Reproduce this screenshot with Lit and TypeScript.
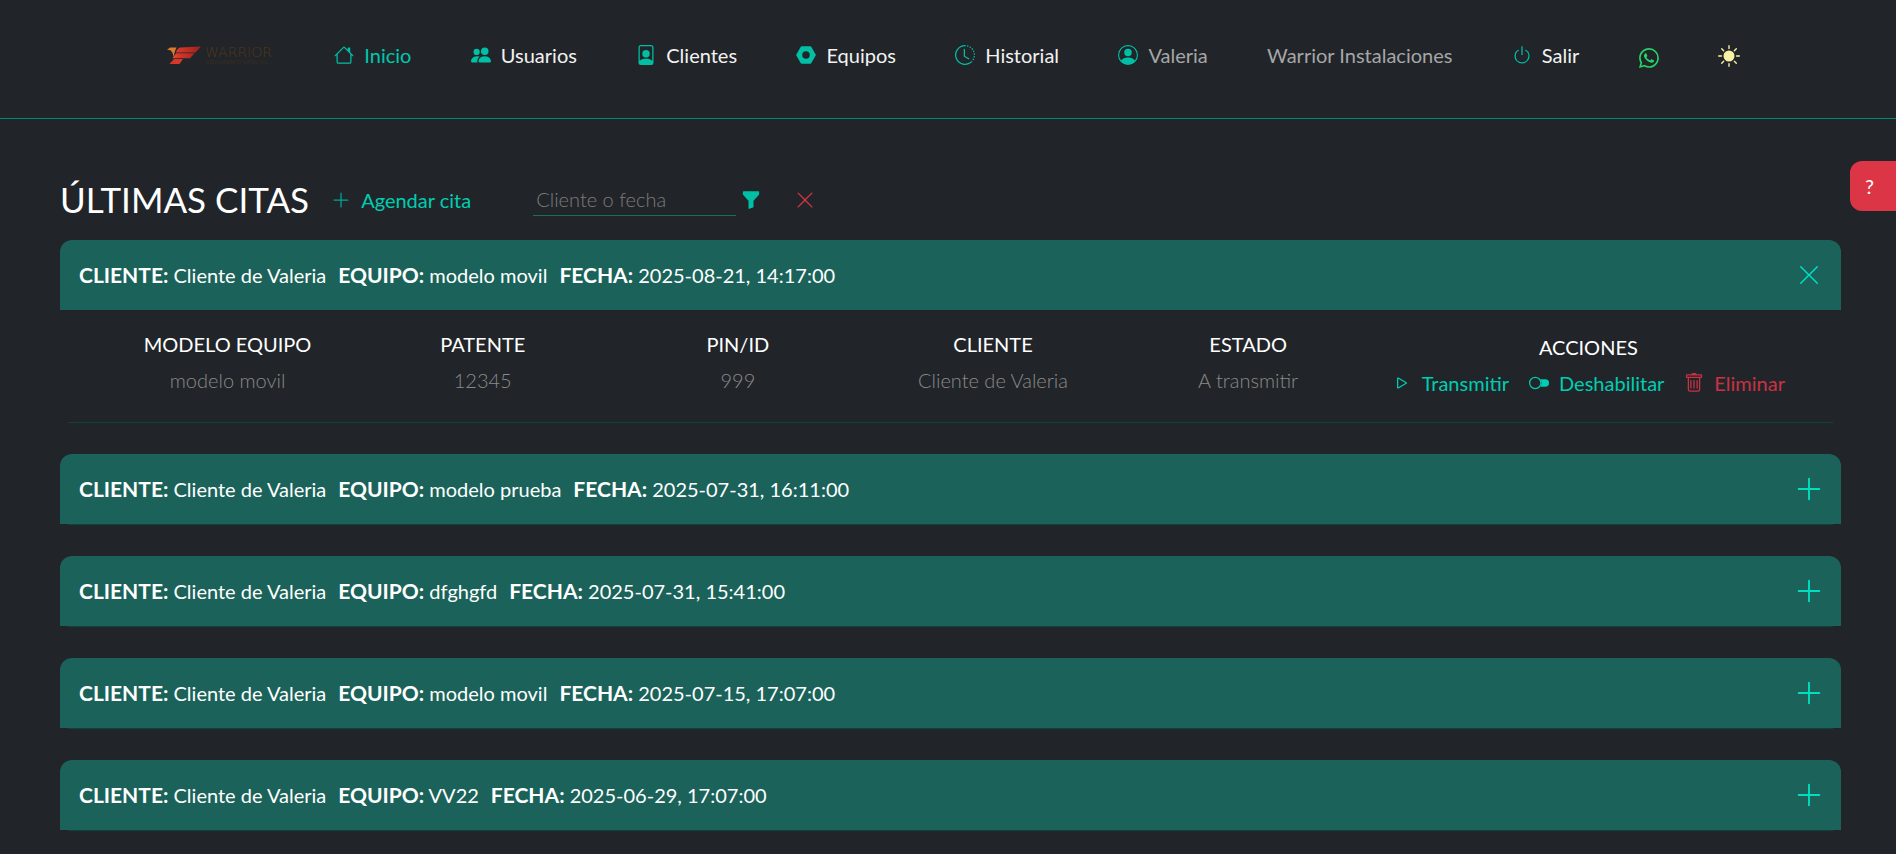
import { LitElement, html, css, svg } from "lit";
import { customElement, property, state } from "lit/decorators.js";

const ICONS: Record<string, string[]> = {
  house: ["M8.707 1.5a1 1 0 0 0-1.414 0L.646 8.146a.5.5 0 0 0 .708.708L2 8.207V13.5A1.5 1.5 0 0 0 3.5 15h9a1.5 1.5 0 0 0 1.5-1.5V8.207l.646.647a.5.5 0 0 0 .708-.708L13 5.793V2.5a.5.5 0 0 0-.5-.5h-1a.5.5 0 0 0-.5.5v1.293zM13 7.207V13.5a.5.5 0 0 1-.5.5h-9a.5.5 0 0 1-.5-.5V7.207l5-5z"],
  people: ["M7 14s-1 0-1-1 1-4 5-4 5 3 5 4-1 1-1 1zm4-6a3 3 0 1 0 0-6 3 3 0 0 0 0 6m-5.784 6A2.24 2.24 0 0 1 5 13c0-1.355.68-2.75 1.936-3.72A6.3 6.3 0 0 0 5 9c-4 0-5 3-5 4s1 1 1 1zM4.5 8a2.5 2.5 0 1 0 0-5 2.5 2.5 0 0 0 0 5"],
  person: ["M12 1a1 1 0 0 1 1 1v10.755S12 11 8 11s-5 1.755-5 1.755V2a1 1 0 0 1 1-1zM4 0a2 2 0 0 0-2 2v12a2 2 0 0 0 2 2h8a2 2 0 0 0 2-2V2a2 2 0 0 0-2-2z", "M8 10a3 3 0 1 0 0-6 3 3 0 0 0 0 6"],
  nut: ["M4.58 1a1 1 0 0 0-.868.504l-3.428 6a1 1 0 0 0 0 .992l3.428 6A1 1 0 0 0 4.58 15h6.84a1 1 0 0 0 .868-.504l3.429-6a1 1 0 0 0 0-.992l-3.429-6A1 1 0 0 0 11.42 1zM8 5a3 3 0 1 1 0 6 3 3 0 0 1 0-6"],
  history: ["M8.515 1.019A7 7 0 0 0 8 1V0a8 8 0 0 1 .589.022zm2.004.45a7 7 0 0 0-.985-.299l.219-.976q.576.129 1.126.342zm1.37.71a7 7 0 0 0-.439-.27l.493-.87a8 8 0 0 1 .979.654l-.615.789a7 7 0 0 0-.418-.302zm1.834 1.79a7 7 0 0 0-.653-.796l.724-.69q.406.429.747.91zm.744 1.352a7 7 0 0 0-.214-.468l.893-.45a8 8 0 0 1 .45 1.088l-.95.313a7 7 0 0 0-.179-.483m.53 2.507a7 7 0 0 0-.1-1.025l.985-.17q.1.58.116 1.17zm-.131 1.538q.05-.254.081-.51l.993.123a8 8 0 0 1-.23 1.155l-.964-.267q.069-.247.12-.501m-.952 2.379q.276-.436.486-.908l.914.405q-.24.54-.555 1.038zm-.964 1.205q.183-.183.35-.378l.758.653a8 8 0 0 1-.401.432z", "M8 1a7 7 0 1 0 4.95 11.95l.707.707A8.001 8.001 0 1 1 8 0z", "M7.5 3a.5.5 0 0 1 .5.5v5.21l3.248 1.856a.5.5 0 0 1-.496.868l-3.5-2A.5.5 0 0 1 7 9V3.5a.5.5 0 0 1 .5-.5"],
  account: ["M11 6a3 3 0 1 1-6 0 3 3 0 0 1 6 0", "M0 8a8 8 0 1 1 16 0A8 8 0 0 1 0 8m8-7a7 7 0 0 0-5.468 11.37C3.242 11.226 4.805 10 8 10s4.757 1.225 5.468 2.37A7 7 0 0 0 8 1"],
  power: ["M7.5 1v7h1V1z", "M3 8.812a5 5 0 0 1 2.578-4.375l-.485-.874A6 6 0 1 0 11 3.616l-.501.865A5 5 0 1 1 3 8.812"],
  whatsapp: ["M13.601 2.326A7.85 7.85 0 0 0 7.994 0C3.627 0 .068 3.558.064 7.926c0 1.399.366 2.76 1.057 3.965L0 16l4.204-1.102a7.9 7.9 0 0 0 3.79.965h.004c4.368 0 7.926-3.558 7.93-7.93A7.9 7.9 0 0 0 13.6 2.326zM7.994 14.521a6.6 6.6 0 0 1-3.356-.92l-.24-.144-2.494.654.666-2.433-.156-.251a6.56 6.56 0 0 1-1.007-3.505c0-3.626 2.957-6.584 6.591-6.584a6.56 6.56 0 0 1 4.66 1.931 6.56 6.56 0 0 1 1.928 4.66c-.004 3.639-2.961 6.592-6.592 6.592m3.615-4.934c-.197-.099-1.17-.578-1.353-.646-.182-.065-.315-.099-.445.099-.133.197-.513.646-.627.775-.114.133-.232.148-.43.05-.197-.1-.836-.308-1.592-.985-.59-.525-.985-1.175-1.103-1.372-.114-.198-.011-.304.088-.403.087-.088.197-.232.296-.346.1-.114.133-.198.198-.33.065-.134.034-.248-.015-.347-.05-.099-.445-1.076-.612-1.47-.16-.389-.323-.335-.445-.34-.114-.007-.247-.007-.38-.007a.73.73 0 0 0-.529.247c-.182.198-.691.677-.691 1.654s.71 1.916.81 2.049c.098.133 1.394 2.132 3.383 2.992.47.205.84.326 1.129.418.475.152.904.129 1.246.08.38-.058 1.171-.48 1.338-.943.164-.464.164-.86.114-.943-.049-.084-.182-.133-.38-.232"],
  sun: ["M8 12a4 4 0 1 0 0-8 4 4 0 0 0 0 8M8 0a.5.5 0 0 1 .5.5v2a.5.5 0 0 1-1 0v-2A.5.5 0 0 1 8 0m0 13a.5.5 0 0 1 .5.5v2a.5.5 0 0 1-1 0v-2A.5.5 0 0 1 8 13m8-5a.5.5 0 0 1-.5.5h-2a.5.5 0 0 1 0-1h2a.5.5 0 0 1 .5.5M3 8a.5.5 0 0 1-.5.5h-2a.5.5 0 0 1 0-1h2A.5.5 0 0 1 3 8m10.657-5.657a.5.5 0 0 1 0 .707l-1.414 1.415a.5.5 0 1 1-.707-.708l1.414-1.414a.5.5 0 0 1 .707 0m-9.193 9.193a.5.5 0 0 1 0 .707L3.05 13.657a.5.5 0 0 1-.707-.707l1.414-1.414a.5.5 0 0 1 .707 0m9.193 2.121a.5.5 0 0 1-.707 0l-1.414-1.414a.5.5 0 0 1 .707-.707l1.414 1.414a.5.5 0 0 1 0 .707M4.464 4.465a.5.5 0 0 1-.707 0L2.343 3.05a.5.5 0 1 1 .707-.707l1.414 1.414a.5.5 0 0 1 0 .708"],
  plus: ["M8 2a.5.5 0 0 1 .5.5v5h5a.5.5 0 0 1 0 1h-5v5a.5.5 0 0 1-1 0v-5h-5a.5.5 0 0 1 0-1h5v-5A.5.5 0 0 1 8 2"],
  close: ["M2.146 2.854a.5.5 0 1 1 .708-.708L8 7.293l5.146-5.147a.5.5 0 0 1 .708.708L8.707 8l5.147 5.146a.5.5 0 0 1-.708.708L8 8.707l-5.146 5.147a.5.5 0 0 1-.708-.708L7.293 8z"],
  funnel: ["M1.5 1.5A.5.5 0 0 1 2 1h12a.5.5 0 0 1 .5.5v2a.5.5 0 0 1-.128.334L10 8.692V13.5a.5.5 0 0 1-.342.474l-3 1A.5.5 0 0 1 6 14.5V8.692L1.628 3.834A.5.5 0 0 1 1.5 3.5z"],
  play: ["M10.804 8 5 4.633v6.734zm.792-.696a.802.802 0 0 1 0 1.392l-6.363 3.692C4.713 12.69 4 12.345 4 11.692V4.308c0-.653.713-.998 1.233-.696z"],
  toggle: ["M9 11c.628-.836 1-1.874 1-3a4.98 4.98 0 0 0-1-3h4a3 3 0 1 1 0 6z", "M5 12a4 4 0 1 1 0-8 4 4 0 0 1 0 8m0 1A5 5 0 1 0 5 3a5 5 0 0 0 0 10"],
  trash: ["M5.5 5.5A.5.5 0 0 1 6 6v6a.5.5 0 0 1-1 0V6a.5.5 0 0 1 .5-.5m2.5 0a.5.5 0 0 1 .5.5v6a.5.5 0 0 1-1 0V6a.5.5 0 0 1 .5-.5m3 .5a.5.5 0 0 0-1 0v6a.5.5 0 0 0 1 0z", "M14.5 3a1 1 0 0 1-1 1H13v9a2 2 0 0 1-2 2H5a2 2 0 0 1-2-2V4h-.5a1 1 0 0 1-1-1V2a1 1 0 0 1 1-1H6a1 1 0 0 1 1-1h2a1 1 0 0 1 1 1h3.5a1 1 0 0 1 1 1zM4.118 4 4 4.059V13a1 1 0 0 0 1 1h6a1 1 0 0 0 1-1V4.059L11.882 4zM2.5 3h11V2h-11z"],
};

@customElement("app-icon")
export class AppIcon extends LitElement {
  @property() name = "";
  static styles = css`
    :host { display: inline-flex; width: 20px; height: 20px; flex: none; }
    .glyph { width: 100%; height: 100%; display: block; fill: currentColor; }
  `;
  render() {
    return html`<svg class="glyph" viewBox="0 0 16 16" aria-hidden="true">
      ${(ICONS[this.name] ?? []).map((d) => svg`<path fill-rule="evenodd" d=${d}></path>`)}
    </svg>`;
  }
}

interface Cita {
  cliente: string;
  equipo: string;
  fecha: string;
  patente: string;
  pin: string;
  estado: string;
}

const CITAS: Cita[] = [
  ["modelo movil", "2025-08-21, 14:17:00"],
  ["modelo prueba", "2025-07-31, 16:11:00"],
  ["dfghgfd", "2025-07-31, 15:41:00"],
  ["modelo movil", "2025-07-15, 17:07:00"],
  ["VV22", "2025-06-29, 17:07:00"],
].map(([equipo, fecha]) => ({
  cliente: "Cliente de Valeria", equipo, fecha, patente: "12345", pin: "999", estado: "A transmitir",
}));

const LINKS = [
  { icon: "house", label: "Inicio", kind: "active" },
  { icon: "people", label: "Usuarios", kind: "" },
  { icon: "person", label: "Clientes", kind: "" },
  { icon: "nut", label: "Equipos", kind: "" },
  { icon: "history", label: "Historial", kind: "" },
  { icon: "account", label: "Valeria", kind: "muted" },
];

@customElement("app-root")
export class AppRoot extends LitElement {
  @state() private open = 0;

  static styles = css`
    :host {
      display: block;
      min-height: 100vh;
      background: #212529;
      color: #fff;
      font-family: Lato, "Open Sans", sans-serif;
      font-size: 20px;
      line-height: 30px;
    }
    *, *::before, *::after { box-sizing: border-box; }
    button {
      font: inherit; color: inherit; background: none; border: 0; padding: 0;
      cursor: pointer; display: inline-flex; align-items: center; gap: 10px;
    }
    a { color: inherit; text-decoration: none; display: inline-flex; align-items: center; gap: 10px; }
    .top {
      border-bottom: 1px solid #00897b;
      padding: 40px 156px 48px 167px;
      display: flex; align-items: center; justify-content: space-between;
      white-space: nowrap;
    }
    .logo { width: 108px; height: 24px; display: block; }
    .link { color: #f2f2f2; }
    .link app-icon { color: #00bfa5; }
    .active { color: #00c8ad; }
    .muted, .company { color: #a6a6a6; }
    .whatsapp { color: #25d366; padding-top: 5px; }
    .sun { color: #f9f1a5; padding-top: 1px; }
    .sun app-icon { width: 22px; height: 22px; }
    .page { padding: 57px 55px 16px 60px; }
    .tools { display: flex; align-items: center; height: 48px; margin-bottom: 16px; }
    .title { font-size: 35px; line-height: 46px; font-weight: 400; margin: 0 22px 0 0; padding-bottom: 2px; }
    .add { color: #00cdb1; margin-right: 62px; }
    .add app-icon { color: #00a894; }
    .search { display: flex; align-items: center; }
    .field {
      width: 203px; height: 32px; padding: 0 3px 2px; font: inherit; font-weight: 300; color: #fff;
      background: transparent; border: 0; border-bottom: 1px solid #1b6b5f; border-radius: 0; outline: 0;
    }
    .field::placeholder { color: #7c7c7c; opacity: 1; }
    .filter { color: #00bfa5; margin-left: 5px; }
    .clear { color: #dc3545; margin-left: 34px; }
    .list { display: grid; gap: 31px; }
    .card::after { content: ""; display: block; height: 1px; margin: 0 8px; background: #0d423e; }
    .head {
      height: 70px; padding: 0 17px 0 19px; border-radius: 12px 12px 0 0; background: #1b635a;
      display: flex; align-items: center; justify-content: space-between;
    }
    .summary { display: flex; gap: 12px; font-size: 20px; line-height: 30px; font-weight: 400; margin: 0; }
    .summary b { font-size: 21px; }
    .expand { color: #00e0c0; width: 30px; height: 30px; justify-content: center; }
    .expand app-icon { width: 30px; height: 30px; }
    .expand .shut { width: 24px; height: 24px; }
    .detail { padding: 19px 40px 24px; }
    .data { width: 100%; table-layout: fixed; border-collapse: collapse; text-align: center; }
    .data th { width: 15%; padding: 0 0 6px; font-weight: 400; vertical-align: top; }
    .data td { padding: 0; font-weight: 300; color: #8a8a8a; vertical-align: top; }
    .data .wide { width: 25%; padding: 3px 0; }
    .data .cell { padding: 3px 0 0; }
    .actions { display: flex; justify-content: center; gap: 20px; font-weight: 400; color: #00cdb1; white-space: nowrap; }
    .danger { color: #c93243; }
    .help {
      position: fixed; top: 161px; right: 0; width: 46px; height: 50px; padding-left: 15px;
      background: #dc3545; color: #fff; border-radius: 12px 0 0 12px;
    }
  `;

  private logo() {
    return html`<svg class="logo" viewBox="0 0 108 24" role="img" aria-label="Warrior">
      <defs>
        <linearGradient id="wing" gradientUnits="userSpaceOnUse" x1="0" x2="34" y1="0" y2="0">
          <stop offset="0" stop-color="#e8862f"></stop>
          <stop offset=".3" stop-color="#d93a2b"></stop>
          <stop offset="1" stop-color="#9c1f1b"></stop>
        </linearGradient>
      </defs>
      <path fill="#dd7a2c" d="M0 7 3 4.500H9.500L8 8 6.500 14Q6 9 3 7Z"></path>
      <g fill="url(#wing)">
        <path d="M13 4.500 34 3.500 28.500 9.500H9Q10 5.500 13 4.500Z"></path>
        <path d="M9 10.300H27.500L23 15.300H5.500Z"></path>
      </g>
      <path fill="#d6372a" d="M7 16H16L12.500 21H2.500Z"></path>
      <text x="38" y="14" fill="#543719" font-family="DejaVu Sans" font-weight="200" font-size="14">WARRIOR</text>
      <text x="39" y="21" fill="#3d2c1e" font-family="DejaVu Sans" font-size="5">SEGUIMIENTO SATELITAL</text>
    </svg>`;
  }

  private details(c: Cita) {
    return html`<div class="detail">
      <table class="data">
        <thead><tr>
          <th scope="col">MODELO EQUIPO</th><th scope="col">PATENTE</th><th scope="col">PIN/ID</th>
          <th scope="col">CLIENTE</th><th scope="col">ESTADO</th><th scope="col" class="wide">ACCIONES</th>
        </tr></thead>
        <tbody><tr>
          <td>${c.equipo}</td><td>${c.patente}</td><td>${c.pin}</td><td>${c.cliente}</td><td>${c.estado}</td>
          <td class="cell"><div class="actions">
            <button type="button"><app-icon name="play"></app-icon>Transmitir</button>
            <button type="button"><app-icon name="toggle"></app-icon>Deshabilitar</button>
            <button type="button" class="danger"><app-icon name="trash"></app-icon>Eliminar</button>
          </div></td>
        </tr></tbody>
      </table>
    </div>`;
  }

  render() {
    return html`
      <nav class="top">
        <a href="#inicio">${this.logo()}</a>
        ${LINKS.map((l) => html`<a class="link ${l.kind}" href="#${l.label.toLowerCase()}"><app-icon name=${l.icon}></app-icon>${l.label}</a>`)}
        <span class="company">Warrior Instalaciones</span>
        <a class="link" href="#salir"><app-icon name="power"></app-icon>Salir</a>
        <a class="whatsapp" href="#whatsapp" aria-label="WhatsApp"><app-icon name="whatsapp"></app-icon></a>
        <button class="sun" type="button" aria-label="Cambiar tema"><app-icon name="sun"></app-icon></button>
      </nav>
      <main class="page">
        <div class="tools">
          <h1 class="title">ÚLTIMAS CITAS</h1>
          <button class="add" type="button"><app-icon name="plus"></app-icon>Agendar cita</button>
          <form class="search" @submit=${(e: Event) => e.preventDefault()}>
            <input class="field" type="text" placeholder="Cliente o fecha" aria-label="Cliente o fecha" />
            <button class="filter" type="submit" aria-label="Filtrar"><app-icon name="funnel"></app-icon></button>
            <button class="clear" type="reset" aria-label="Limpiar"><app-icon name="close"></app-icon></button>
          </form>
        </div>
        <div class="list">
          ${CITAS.map((c, i) => {
            const isOpen = i === this.open;
            return html`<section class="card">
              <div class="head">
                <h2 class="summary">
                  <span><b>CLIENTE:</b> ${c.cliente}</span>
                  <span><b>EQUIPO:</b> ${c.equipo}</span>
                  <span><b>FECHA:</b> ${c.fecha}</span>
                </h2>
                <button class="expand" type="button" aria-expanded=${isOpen} aria-label="Detalle"
                  @click=${() => (this.open = isOpen ? -1 : i)}>
                  ${isOpen ? html`<app-icon class="shut" name="close"></app-icon>` : html`<app-icon name="plus"></app-icon>`}
                </button>
              </div>
              ${isOpen ? this.details(c) : ""}
            </section>`;
          })}
        </div>
      </main>
      <button class="help" type="button" aria-label="Ayuda">?</button>
    `;
  }
}
